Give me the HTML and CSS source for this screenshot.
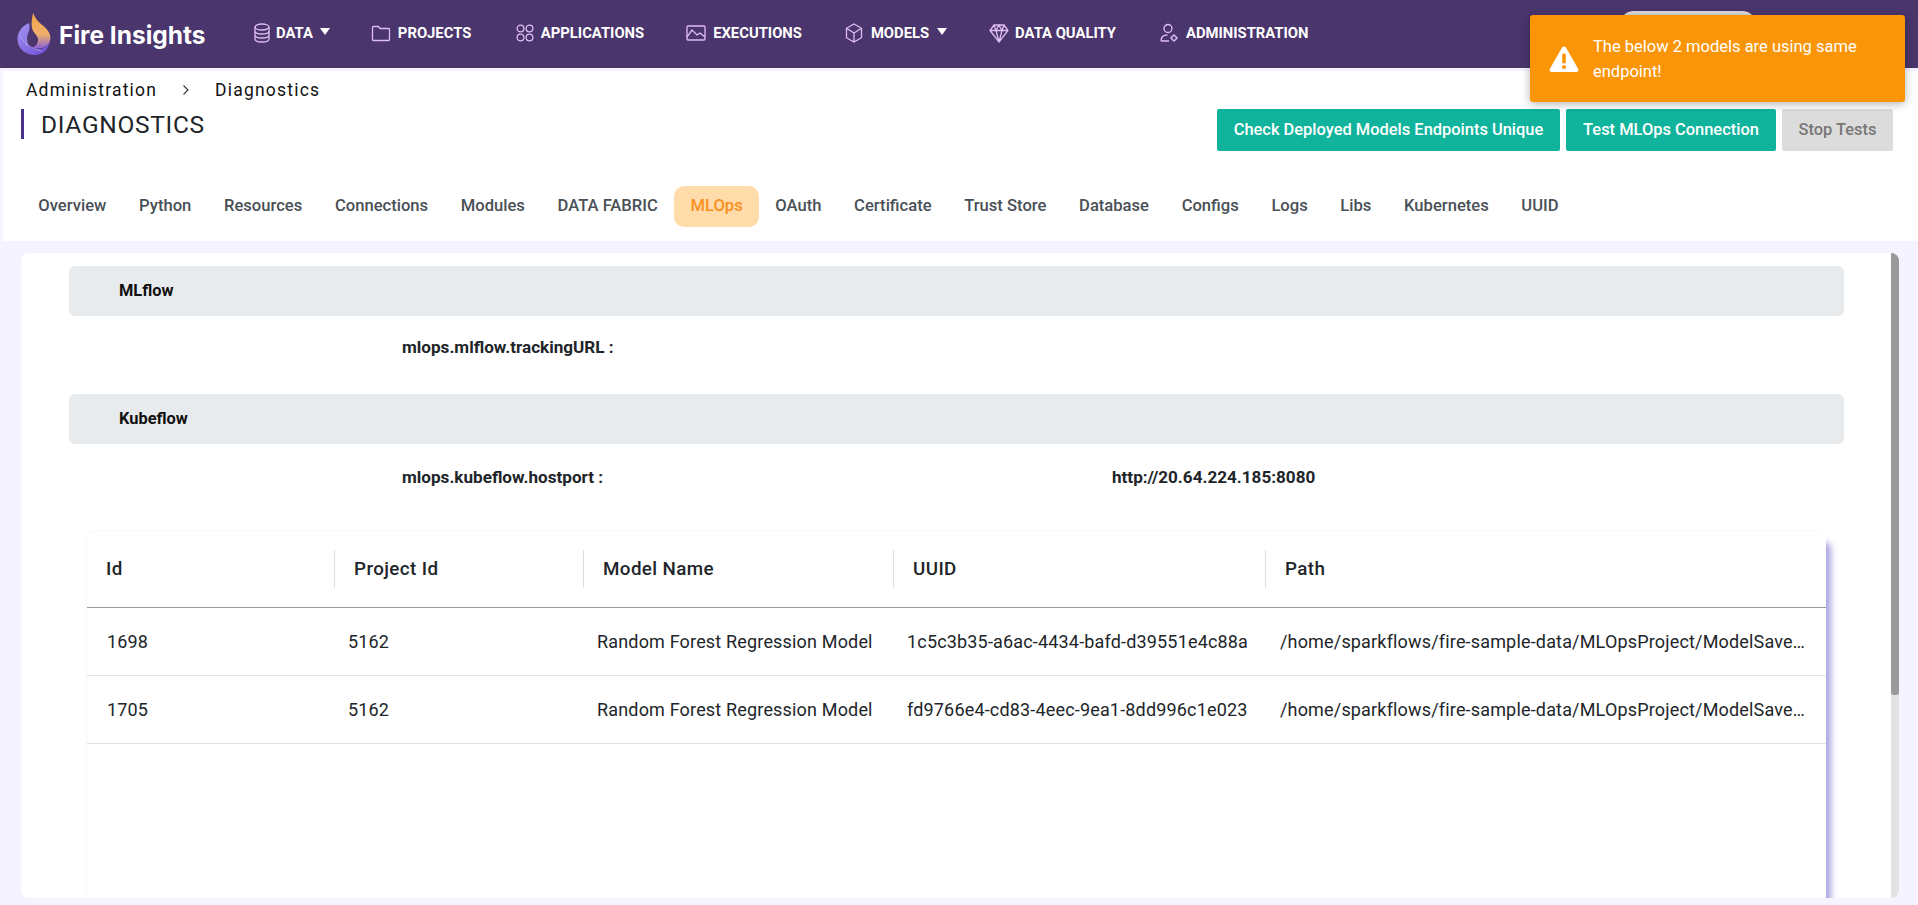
FILE: index.html
```html
<!DOCTYPE html>
<html lang="en">
<head>
<meta charset="utf-8">
<title>Diagnostics</title>
<link rel="stylesheet" href="styles.css">
</head>
<body>
<header class="topbar">
  <a class="brand">
    <svg class="flame" viewBox="0 0 34 42" width="34" height="42">
      <defs>
        <linearGradient id="fo" x1="0.5" y1="0" x2="0.5" y2="1"><stop offset="0" stop-color="#f3a345"/><stop offset="0.6" stop-color="#f0b06a"/><stop offset="1" stop-color="#8a62d8"/></linearGradient>
        <linearGradient id="fp" x1="0" y1="0" x2="1" y2="1"><stop offset="0" stop-color="#a696f2"/><stop offset="1" stop-color="#6a4bd6"/></linearGradient>
      </defs>
      <path d="M16 0C15 6 14 10 15 15C16 20 20 21 21 26C21.500 30 19 33 15 35C22 36 30 36 33 28C35 20 29 15 24 11C20 8 18 4 16 0Z" fill="url(#fo)"/>
      <path d="M12 10C5 13 0 19 0.500 27C1 36 9 42 18 42C25 42 31 37 33 29C30 35 24 37 19 36C12 35 9 30 10 25C10.500 20 14 17 12 10Z" fill="url(#fp)"/>
      <path d="M3 22C6 29 13 35 24 38M9 33C11 30 10 27 9 25" fill="none" stroke="#c3b6fa" stroke-width="0.800" opacity="0.700"/>
    </svg>
    <span class="brand-name">Fire Insights</span>
  </a>
  <nav class="nav">
    <a class="nav-item nav-data">
      <svg class="ico" viewBox="0 0 18 20" width="18" height="20"><ellipse cx="9" cy="4" rx="7" ry="3"/><path d="M2 4v12c0 1.700 3 3 7 3s7-1.300 7-3V4M2 8c0 1.700 3 3 7 3s7-1.300 7-3M2 12c0 1.700 3 3 7 3s7-1.300 7-3"/></svg>
      <span>DATA</span><i class="caret"></i>
    </a>
    <a class="nav-item nav-projects">
      <svg class="ico" viewBox="0 0 20 18" width="20" height="18"><path d="M1.500 3.500a1 1 0 0 1 1-1h5l1.500 2h8.500a1 1 0 0 1 1 1v10a1 1 0 0 1-1 1h-15a1 1 0 0 1-1-1z"/></svg>
      <span>PROJECTS</span>
    </a>
    <a class="nav-item nav-apps">
      <svg class="ico" viewBox="0 0 18 18" width="18" height="18"><circle cx="4.500" cy="4.500" r="3.400"/><circle cx="13.500" cy="4.500" r="3.400"/><circle cx="4.500" cy="13.500" r="3.400"/><circle cx="13.500" cy="13.500" r="3.400"/></svg>
      <span>APPLICATIONS</span>
    </a>
    <a class="nav-item nav-exec">
      <svg class="ico" viewBox="0 0 20 16" width="20" height="16"><rect x="1" y="1" width="18" height="14" rx="1"/><path d="M1 12l5-7 5 5 3-2 5 4"/></svg>
      <span>EXECUTIONS</span>
    </a>
    <a class="nav-item nav-models">
      <svg class="ico" viewBox="0 0 18 20" width="18" height="20"><path d="M9 1l7.500 4.300v9.400L9 19l-7.500-4.300V5.300zM1.500 5.300L9 10l7.500-4.700M9 10v9"/></svg>
      <span>MODELS</span><i class="caret"></i>
    </a>
    <a class="nav-item nav-quality">
      <svg class="ico" viewBox="0 0 20 20" width="20" height="20"><path d="M5 2h10l4 5.500L10 19 1 7.500zM1 7.500h18M7 7.500L10 19l3-11.500M5 2l2 5.500L10 2l3 5.500L15 2"/></svg>
      <span>DATA QUALITY</span>
    </a>
    <a class="nav-item nav-admin">
      <svg class="ico" viewBox="0 0 18 20" width="18" height="20"><circle cx="8" cy="5.500" r="4"/><path d="M1 18c0-4 2.500-6 6.500-6M1 18h8"/><circle cx="14" cy="15" r="2.300"/><path d="M14 11.300v1.400M14 17.300v1.400M10.300 15h1.400M16.300 15h1.400"/></svg>
      <span>ADMINISTRATION</span>
    </a>
  </nav>
  <div class="user-pill"></div>
</header>

<section class="page-head">
  <div class="head-row">
    <div class="head-left">
      <ol class="crumbs">
        <li>Administration</li>
        <li class="crumb-sep"><svg viewBox="0 0 8 12" width="8" height="12"><path d="M1.500 1.500L6 6l-4.500 4.500"/></svg></li>
        <li>Diagnostics</li>
      </ol>
      <h1 class="title">DIAGNOSTICS</h1>
    </div>
    <div class="actions">
      <button class="btn btn-green btn-check">Check Deployed Models Endpoints Unique</button>
      <button class="btn btn-green btn-test">Test MLOps Connection</button>
      <button class="btn btn-off">Stop Tests</button>
    </div>
  </div>
  <ul class="tabs">
    <li class="tab">Overview</li>
    <li class="tab">Python</li>
    <li class="tab">Resources</li>
    <li class="tab">Connections</li>
    <li class="tab">Modules</li>
    <li class="tab">DATA FABRIC</li>
    <li class="tab tab-active">MLOps</li>
    <li class="tab">OAuth</li>
    <li class="tab">Certificate</li>
    <li class="tab">Trust Store</li>
    <li class="tab">Database</li>
    <li class="tab">Configs</li>
    <li class="tab">Logs</li>
    <li class="tab">Libs</li>
    <li class="tab">Kubernetes</li>
    <li class="tab">UUID</li>
  </ul>
</section>

<main class="content">
  <div class="card">
    <div class="card-body">
      <div class="band">MLflow</div>
      <div class="prop prop-first"><span class="prop-key">mlops.mlflow.trackingURL :</span><span class="prop-val"></span></div>
      <div class="band">Kubeflow</div>
      <div class="prop prop-second"><span class="prop-key">mlops.kubeflow.hostport :</span><span class="prop-val">http://20.64.224.185:8080</span></div>
      <div class="table-wrap">
        <table class="grid">
          <colgroup><col class="c-id"><col class="c-project"><col class="c-model"><col class="c-uuid"><col class="c-path"></colgroup>
          <thead>
            <tr><th><span>Id</span></th><th><span>Project Id</span></th><th><span>Model Name</span></th><th><span>UUID</span></th><th><span>Path</span></th></tr>
          </thead>
          <tbody>
            <tr><td>1698</td><td>5162</td><td>Random Forest Regression Model</td><td class="cell-uuid">1c5c3b35-a6ac-4434-bafd-d39551e4c88a</td><td class="cell-path">/home/sparkflows/fire-sample-data/MLOpsProject/ModelSaveExample/random-forest-regression</td></tr>
            <tr><td>1705</td><td>5162</td><td>Random Forest Regression Model</td><td class="cell-uuid">fd9766e4-cd83-4eec-9ea1-8dd996c1e023</td><td class="cell-path">/home/sparkflows/fire-sample-data/MLOpsProject/ModelSaveExample/random-forest-regression</td></tr>
          </tbody>
        </table>
      </div>
    </div>
    <div class="scrollbar"><div class="thumb"></div></div>
  </div>
</main>

<div class="toast" role="alert">
  <svg viewBox="0 0 30 27" width="30" height="27"><path d="M15 1.500c.8 0 1.500.4 1.900 1.100l12.300 21.300c.8 1.400-.2 3.100-1.900 3.100H2.700c-1.700 0-2.700-1.700-1.900-3.100L13.100 2.600c.4-.7 1.100-1.100 1.900-1.100z" fill="#fff"/><rect x="13.200" y="8.500" width="3.600" height="10" rx="1.400" fill="#fb9508"/><circle cx="15" cy="22" r="2" fill="#fb9508"/></svg>
  <p>The below 2 models are using same endpoint!</p>
</div>
</body>
</html>
```

FILE: styles.css
```css
* { box-sizing: border-box; }
html, body { margin: 0; padding: 0; }
body {
  width: 1918px;
  height: 905px;
  overflow: hidden;
  background: #f5f3ff;
  font-family: Roboto, "Liberation Sans", sans-serif;
  color: #212529;
}

/* top bar */
.topbar {
  height: 68px;
  background: #4a356c;
  display: flex;
  align-items: center;
}
.brand {
  display: flex;
  align-items: center;
  gap: 8px;
  margin-left: 17px;
  width: 236px;
  flex: none;
}
.brand-name {
  font-family: Inter, "Open Sans", sans-serif;
  font-weight: 700;
  font-size: 24.500px;
  color: #fff;
  white-space: nowrap;
  padding-top: 2px;
}
.nav { display: flex; align-items: center; height: 68px; padding-bottom: 2px; }
.nav-item {
  display: flex;
  align-items: center;
  gap: 5px;
  color: #fff;
  font-size: 14.800px;
  font-weight: 700;
  white-space: nowrap;
}
.nav-data .caret { margin-left: 2px; }
.nav-projects { margin-left: 41px; gap: 7px; }
.nav-apps { margin-left: 45px; gap: 6.500px; }
.nav-exec { margin-left: 42px; gap: 7px; }
.nav-models { margin-left: 43px; gap: 8px; }
.nav-quality { margin-left: 42px; gap: 6px; }
.nav-admin { margin-left: 44px; gap: 8px; }
.ico { fill: none; stroke: #e0bdf2; stroke-width: 1.300; flex: none; }
.caret {
  width: 0;
  height: 0;
  margin: -4px 0 0 3px;
  border-left: 5.500px solid transparent;
  border-right: 5.500px solid transparent;
  border-top: 7px solid #fff;
}
.nav-models .caret { margin-left: 0; }
.user-pill {
  position: absolute;
  left: 1619px;
  top: 11px;
  width: 138px;
  height: 30px;
  border-radius: 15px;
  background: #dcdcdc;
}

/* page head */
.page-head {
  margin: 3px 0 0 3px;
  height: 170px;
  background: #fff;
  padding: 9px 25px 0 18px;
}
.head-row { display: flex; justify-content: space-between; }
.crumbs {
  list-style: none;
  margin: 0;
  padding: 0 0 0 5px;
  display: flex;
  align-items: center;
  height: 20px;
  font-size: 17.500px;
  letter-spacing: 1.200px;
  color: #111;
}
.crumb-sep { width: 58px; display: flex; justify-content: center; }
.crumb-sep svg { fill: none; stroke: #333; stroke-width: 1.100; }
.title {
  margin: 9px 0 0;
  height: 30px;
  border-left: 3px solid #4a2f8c;
  padding-left: 17px;
  font-size: 24.500px;
  line-height: 32px;
  font-weight: 400;
  color: #212529;
  letter-spacing: 0.700px;
}
.actions { display: flex; gap: 6px; margin-top: 29px; }
.btn {
  height: 42px;
  border: 0;
  border-radius: 2px;
  font-family: inherit;
  font-size: 16.450px;
  font-weight: 500;
  padding: 0 0 2px;
  color: #fff;
}
.btn-green { background: #10b39b; }
.btn-check { width: 343px; }
.btn-test { width: 210px; }
.btn-off { width: 111px; background: #dcdcdc; color: #777; }

.tabs {
  list-style: none;
  margin: 35px 0 0 1px;
  padding: 0;
  display: flex;
}
.tab {
  height: 41px;
  padding: 0 16.320px 2px;
  display: flex;
  align-items: center;
  border-radius: 10px;
  font-size: 16.600px;
  font-weight: 500;
  color: #495057;
  white-space: nowrap;
}
.tab-active { background: #ffdcaa; color: #fb8f1e; }

/* content */
.content { padding: 12px 19px 0 21px; }
.card {
  height: 645px;
  background: #fff;
  border-radius: 8px;
  display: flex;
  overflow: hidden;
}
.card-body { flex: 1; min-width: 0; padding: 13px 47px 0 48px; }
.band {
  height: 50px;
  background: #e8ebee;
  border-radius: 6px;
  padding: 0 0 2px 50px;
  display: flex;
  align-items: center;
  font-size: 16.400px;
  font-weight: 700;
  color: #111;
}
.prop {
  display: grid;
  grid-template-columns: 710px 1fr;
  padding-left: 333px;
  font-size: 17.100px;
  font-weight: 700;
  color: #212529;
  line-height: 20px;
}
.prop-first { height: 78px; padding-top: 21px; }
.prop-second { height: 87px; padding-top: 23px; }

.table-wrap {
  margin: 0 18px 0 18px;
  height: 400px;
  background: #fff;
  border-radius: 8px 8px 0 0;
  box-shadow: 6px 10px 6px -1px rgba(100, 90, 200, 0.55), -1px 0 2px rgba(0, 0, 0, 0.04), 0 -1px 2px rgba(0, 0, 0, 0.02);
}
.grid {
  width: 100%;
  table-layout: fixed;
  border-collapse: collapse;
}
.c-id { width: 247px; }
.c-project { width: 249px; }
.c-model { width: 310px; }
.c-uuid { width: 372px; }
.grid th {
  height: 76px;
  padding: 0 0 0 20px;
  text-align: left;
  font-size: 18.800px;
  font-weight: 500;
  color: #212529;
  letter-spacing: 0.400px;
  border-bottom: 1px solid #999;
  position: relative;
}
.grid th:first-child { padding-left: 19px; }
.grid th + th::before {
  content: "";
  position: absolute;
  left: 0;
  top: 19px;
  height: 38px;
  width: 1px;
  background: #ddd;
}
.grid td {
  height: 68px;
  padding: 0 12px 0 14px;
  font-size: 18px;
  color: #212529;
  letter-spacing: 0.170px;
  border-bottom: 1px solid #e3e3e3;
  white-space: nowrap;
  overflow: hidden;
  text-overflow: ellipsis;
}
.grid td:first-child { padding-left: 20px; }
.grid .cell-uuid { padding-right: 4px; }
.grid .cell-path { padding: 0 18px 0 15px; }

.scrollbar { width: 8px; flex: none; background: #e2e2e2; }
.thumb { height: 442px; background: #999; border-radius: 0 0 3px 3px; }

/* toast */
.toast {
  position: absolute;
  left: 1530px;
  top: 15px;
  width: 375px;
  height: 87px;
  background: #fb9508;
  border-radius: 3px;
  box-shadow: 0 2px 10px rgba(0, 0, 0, 0.3);
  display: flex;
  align-items: center;
  padding-left: 19px;
  gap: 14px;
  color: #fff;
}
.toast svg { flex: none; }
.toast p {
  margin: 0;
  font-size: 16.500px;
  line-height: 25px;
  width: 290px;
}
```
